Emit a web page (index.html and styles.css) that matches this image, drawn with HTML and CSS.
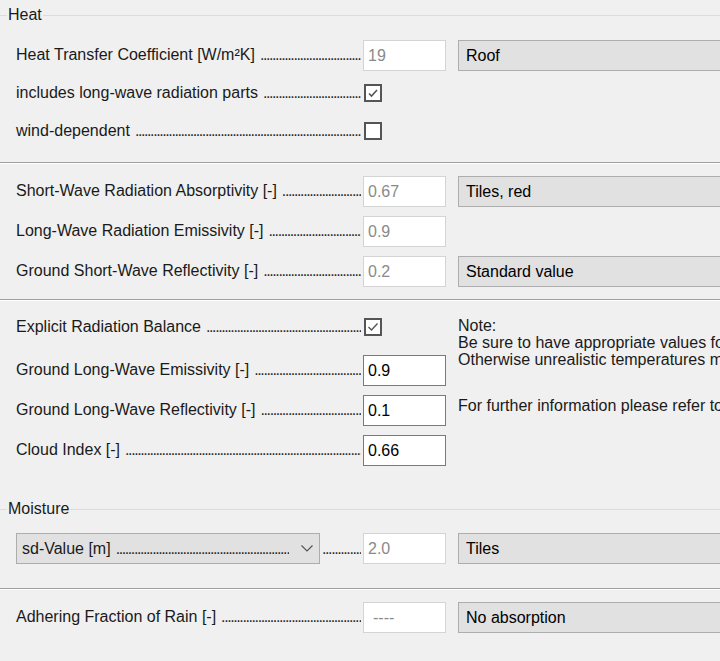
FILE: index.html
```html
<!DOCTYPE html>
<html lang="en">
<head>
  <meta charset="UTF-8">
  <title>Surface Parameters</title>
  <link rel="stylesheet" href="styles.css">
</head>
<body>

  <!-- Heat group -->
  <div class="group-head"><span>Heat</span></div>
  <div class="section heat">
    <div class="row">
      <div class="label"><span>Heat Transfer Coefficient [W/m²K]</span><span class="leader"></span></div>
      <div class="field disabled">19</div>
      <div class="combo">Roof</div>
    </div>
    <div class="row">
      <div class="label"><span>includes long-wave radiation parts</span><span class="leader"></span></div>
      <div class="check">
        <svg width="14" height="14" viewBox="0 0 14 14"><polyline points="3,7.5 5.5,10 11,4" fill="none" stroke="#555" stroke-width="1.6"/></svg>
      </div>
    </div>
    <div class="row">
      <div class="label"><span>wind-dependent</span><span class="leader"></span></div>
      <div class="check"></div>
    </div>
  </div>

  <div class="separator"></div>

  <!-- Short-wave / long-wave -->
  <div class="section radiation">
    <div class="row">
      <div class="label"><span>Short-Wave Radiation Absorptivity [-]</span><span class="leader"></span></div>
      <div class="field disabled">0.67</div>
      <div class="combo">Tiles, red</div>
    </div>
    <div class="row">
      <div class="label"><span>Long-Wave Radiation Emissivity [-]</span><span class="leader"></span></div>
      <div class="field disabled">0.9</div>
    </div>
    <div class="row">
      <div class="label"><span>Ground Short-Wave Reflectivity [-]</span><span class="leader"></span></div>
      <div class="field disabled">0.2</div>
      <div class="combo">Standard value</div>
    </div>
  </div>

  <div class="separator sep-balance"></div>

  <!-- Explicit radiation balance -->
  <div class="section balance">
    <div class="rows">
      <div class="row">
        <div class="label"><span>Explicit Radiation Balance</span><span class="leader"></span></div>
        <div class="check">
          <svg width="14" height="14" viewBox="0 0 14 14"><polyline points="2.5,7 5.5,10 11.5,3.5" fill="none" stroke="#555" stroke-width="1.4"/></svg>
        </div>
      </div>
      <div class="row first-input">
        <div class="label"><span>Ground Long-Wave Emissivity [-]</span><span class="leader"></span></div>
        <div class="field">0.9</div>
      </div>
      <div class="row">
        <div class="label"><span>Ground Long-Wave Reflectivity [-]</span><span class="leader"></span></div>
        <div class="field">0.1</div>
      </div>
      <div class="row">
        <div class="label"><span>Cloud Index [-]</span><span class="leader"></span></div>
        <div class="field">0.66</div>
      </div>
    </div>
    <div class="note">
      <div>Note:</div>
      <div>Be sure to have appropriate values for</div>
      <div>Otherwise unrealistic temperatures may</div>
      <div class="note-more">For further information please refer to the</div>
    </div>
  </div>

  <!-- Moisture group -->
  <div class="group-head moisture-head"><span>Moisture</span></div>
  <div class="section moisture">
    <div class="row">
      <div class="label">
        <div class="select">
          <span>sd-Value [m]</span><span class="leader"></span>
          <svg class="chevron" width="12" height="7" viewBox="0 0 12 7"><polyline points="0.5,0.5 6,6 11.5,0.5" fill="none" stroke="#555" stroke-width="1.2"/></svg>
        </div>
        <span class="leader after-select"></span>
      </div>
      <div class="field disabled">2.0</div>
      <div class="combo">Tiles</div>
    </div>
  </div>

  <div class="separator sep-rain"></div>

  <div class="section rain">
    <div class="row">
      <div class="label"><span>Adhering Fraction of Rain [-]</span><span class="leader"></span></div>
      <div class="field disabled dashes">----</div>
      <div class="combo">No absorption</div>
    </div>
  </div>

</body>
</html>
```

FILE: styles.css
```css
body {
  margin: 0;
  padding: 0;
  width: 720px;
  height: 661px;
  overflow: hidden;
  background-color: #f0f0f0;
  color: #1a1a1a;
  font-family: "Liberation Sans", Arial, sans-serif;
  font-size: 16px;
}

/* Cabeçalho do grupo (Heat, Moisture) */
.group-head {
  display: flex;
  align-items: center;
  height: 30px;
}

.group-head::before {
  content: "";
  width: 7px;
  height: 1px;
  background-color: #dcdcdc;
}

.group-head::after {
  content: "";
  flex: 1;
  height: 1px;
  background-color: #dcdcdc;
}

.group-head span {
  padding: 0 1px;
}

.moisture-head {
  margin-top: 24px;
}

/* Linhas separadoras */
.separator {
  height: 0;
  border-top: 1px solid #a0a0a0;
  border-bottom: 1px solid #ffffff;
  margin-top: 12px;
}

.sep-balance {
  margin-top: 8px;
}

.sep-rain {
  margin-top: 20px;
}

/* Seções */
.section {
  padding-left: 16px;
}

.heat {
  margin-top: 6px;
}

.heat .row {
  height: 38px;
}

.radiation {
  margin-top: 7px;
}

.balance {
  display: flex;
  padding-top: 6px;
}

.balance .rows {
  flex: none;
  width: 430px;
}

.first-input {
  margin-top: 3px;
}

.moisture {
  margin-top: 4px;
}

.rain {
  margin-top: 7px;
}

/* Linha: rótulo, campo, combo */
.row {
  display: grid;
  grid-template-columns: 347px 83px 280px;
  align-items: center;
  height: 40px;
}

.label {
  display: flex;
  align-items: baseline;
  min-width: 0;
  padding-right: 2px;
  white-space: nowrap;
}

.leader {
  flex: 1;
  min-width: 0;
  overflow: hidden;
  margin-left: 5px;
  letter-spacing: -1.4px;
  color: #2a2a2a;
}

.leader::after {
  content: "......................................................................................................................................................";
}

/* Campos de texto */
.field {
  box-sizing: border-box;
  height: 31px;
  padding: 4px 4px 0;
  background-color: #fff;
  border: 1px solid #7a7a7a;
  color: #000;
  line-height: 22px;
}

.field.disabled {
  border-color: #d4d4d4;
  color: #8a8a8a;
}

.field.dashes {
  padding-left: 9px;
}

/* Combos cinza */
.combo {
  box-sizing: border-box;
  height: 31px;
  margin-left: 12px;
  padding: 4px 7px 0;
  background-color: #e1e1e1;
  border: 1px solid #adadad;
  color: #000;
  line-height: 22px;
  white-space: nowrap;
}

/* Caixa de seleção */
.check {
  box-sizing: border-box;
  width: 18px;
  height: 18px;
  margin-left: 1px;
  background-color: #fff;
  border: 2px solid #555;
  display: flex;
  align-items: center;
  justify-content: center;
}

/* Nota */
.note {
  margin-left: 12px;
  padding-top: 10px;
  line-height: 17px;
  white-space: nowrap;
}

.note-more {
  margin-top: 29px;
}

/* Seletor sd-Value */
.select {
  box-sizing: border-box;
  display: flex;
  align-items: baseline;
  flex: none;
  width: 304px;
  height: 31px;
  padding: 4px 6px 0 5px;
  background-color: #e1e1e1;
  border: 1px solid #adadad;
  line-height: 22px;
}

.select .leader {
  margin-right: 12px;
}

.leader.after-select {
  margin-left: 2px;
}

.chevron {
  align-self: center;
  margin-bottom: 3px;
}
```
